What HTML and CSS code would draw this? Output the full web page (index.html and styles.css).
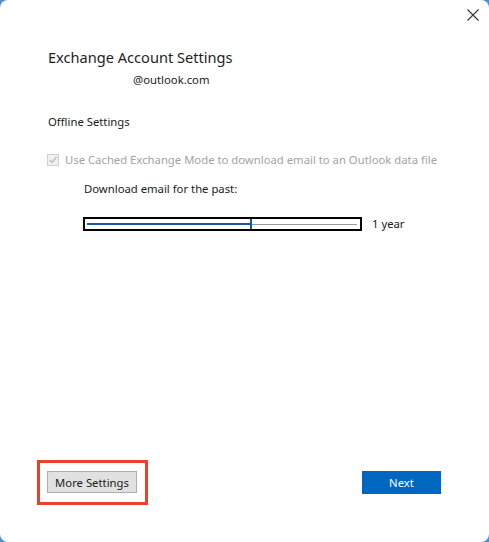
FILE: index.html
```html
<!DOCTYPE html>
<html>
<head>
  <title>Exchange Account Settings</title>
  <meta charset="UTF-8">
  <meta name="viewport" content="width=device-width, initial-scale=1.0">
  <link rel="stylesheet" href="styles.css">
</head>
<body>
  <div class="dialog">
    <div class="titlebar">
      <button class="close" aria-label="Close">
        <svg width="12" height="12" viewBox="0 0 12 12">
          <path d="M0.5 0.5 L11.5 11.5 M11.5 0.5 L0.5 11.5" stroke="#333" stroke-width="1.1" fill="none"/>
        </svg>
      </button>
    </div>

    <div class="content">
      <h1>Exchange Account Settings</h1>
      <p class="account">@outlook.com</p>

      <h2>Offline Settings</h2>

      <label class="cached">
        <span class="checkbox">
          <svg width="10" height="10" viewBox="0 0 10 10">
            <path d="M1.5 5 L4 7.5 L8.5 2" stroke="#bdbdbd" stroke-width="1.4" fill="none"/>
          </svg>
        </span>
        Use Cached Exchange Mode to download email to an Outlook data file
      </label>

      <div class="download">
        <p class="download-label">Download email for the past:</p>
        <div class="slider-row">
          <div class="slider">
            <span class="track-fill"></span>
            <span class="thumb"></span>
            <span class="track-rest"></span>
          </div>
          <span class="slider-value">1 year</span>
        </div>
      </div>
    </div>

    <div class="footer">
      <div class="highlight">
        <button class="btn">More Settings</button>
      </div>
      <button class="btn btn-primary">Next</button>
    </div>
  </div>
</body>
</html>
```

FILE: styles.css
```css
html {
  background-color: #4f8fce;
}
body {
  margin: 0;
  font-family: "Noto Sans", "Open Sans", sans-serif;
  font-size: 11.3px;
  color: #1b1b1b;
}
.dialog {
  height: 542px;
  background-color: #fff;
  border-radius: 8px;
  display: flex;
  flex-direction: column;
}
.titlebar {
  display: flex;
  justify-content: flex-end;
  padding: 9px 10px 0 0;
  height: 21px;
}
.close {
  border: none;
  background: none;
  padding: 0;
  width: 12px;
  height: 12px;
  display: flex;
}
.content {
  padding: 0 48px;
}
h1 {
  margin: 17px 0 0;
  font-size: 14.6px;
  font-weight: normal;
  line-height: 20px;
  color: #1e1e1e;
}
.account {
  margin: 5px 0 0 85px;
  line-height: 16px;
}
h2 {
  margin: 26px 0 0;
  font-size: 11.3px;
  font-weight: normal;
  line-height: 16px;
}
.cached {
  display: flex;
  align-items: center;
  gap: 6px;
  margin: 22px 0 0 -1px;
  line-height: 16px;
  color: #a3a3a3;
  white-space: nowrap;
}
.checkbox {
  width: 10px;
  height: 10px;
  border: 1px solid #cfcfcf;
  background-color: #f0f0f0;
  display: flex;
}
.download {
  padding-left: 35px;
}
.download-label {
  margin: 13px 0 0 1px;
  line-height: 16px;
}
.slider-row {
  display: flex;
  align-items: center;
  gap: 10px;
  margin-top: 19px;
}
.slider {
  width: 270px;
  height: 10px;
  border: 2px solid #000;
  display: flex;
  align-items: center;
  padding: 0 3px 0 2px;
}
.track-fill {
  width: 163px;
  height: 2px;
  background-color: #17599b;
}
.thumb {
  width: 2px;
  height: 10px;
  background-color: #17599b;
}
.track-rest {
  flex: 1;
  height: 1px;
  background-color: #9a9a9a;
}
.slider-value {
  line-height: 16px;
}
.footer {
  margin-top: auto;
  display: flex;
  justify-content: space-between;
  align-items: center;
  padding: 0 48px 37px 37px;
}
.highlight {
  border: 3px solid #e8412c;
  padding: 8px 8px 9px 7px;
}
.btn {
  font-family: inherit;
  font-size: 11.3px;
  height: 22px;
  width: 90px;
  padding: 0;
  border: 1px solid #adadad;
  background-color: #e1e1e1;
  color: #1b1b1b;
}
.btn-primary {
  width: 79px;
  height: 23px;
  border: none;
  background-color: #0067c0;
  color: #fff;
}
```
